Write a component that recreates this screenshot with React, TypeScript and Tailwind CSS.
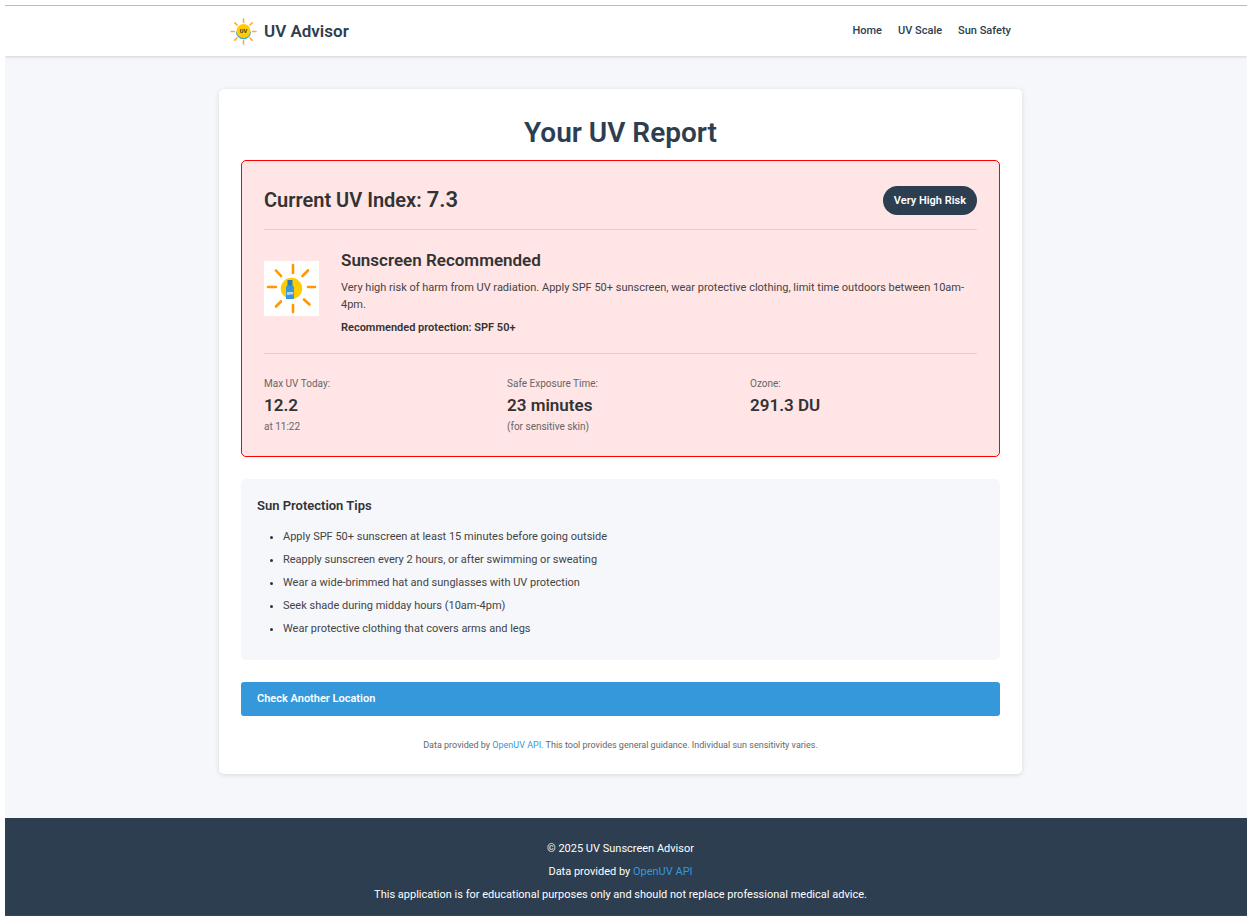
const NAV = ["Home", "UV Scale", "Sun Safety"];

const TIPS = [
  "Apply SPF 50+ sunscreen at least 15 minutes before going outside",
  "Reapply sunscreen every 2 hours, or after swimming or sweating",
  "Wear a wide-brimmed hat and sunglasses with UV protection",
  "Seek shade during midday hours (10am-4pm)",
  "Wear protective clothing that covers arms and legs",
];

const STATS = [
  { label: "Max UV Today:", value: "12.2", note: "at 11:22" },
  { label: "Safe Exposure Time:", value: "23 minutes", note: "(for sensitive skin)" },
  { label: "Ozone:", value: "291.3 DU", note: "" },
];

function LogoIcon() {
  return (
    <svg viewBox="0 0 100 100" className="size-[27px]" aria-hidden="true">
      <g stroke="#ffa837" strokeWidth="6" strokeLinecap="round">
        <path d="M50 4V16M50 84V96M4 50H16M84 50H96M18 18L26 26M74 74L82 82M18 82L26 74M74 26L82 18" />
      </g>
      <path d="M22 50A28 29 0 0 0 78 50Z" fill="#3fa0c8" />
      <circle cx="50" cy="48" r="26" fill="#ffcc00" />
      <text x="50" y="54" textAnchor="middle" fontSize="21" fontWeight="700" fill="#333333">UV</text>
    </svg>
  );
}

function SunscreenIcon() {
  return (
    <svg viewBox="0 0 55 55" className="mb-1.5 size-[55px] shrink-0 bg-white" aria-hidden="true">
      <path
        d="M29 4V12M29 44V51M4 26H12M44 26H51M12 9.500L17 15M44 9.500L38.500 15M12 45.500L17 40.500M45.500 43.500L40 38.500"
        stroke="#ff9800"
        strokeWidth="2.600"
        strokeLinecap="round"
      />
      <circle cx="27.500" cy="27.500" r="10.700" fill="#ffcc00" />
      <path d="M23.500 19H28.500V25H23.500Z" fill="#2980b9" />
      <path d="M22 26.500Q22 24.500 24 24.500H28Q30 24.500 30 26.500V38H22Z" fill="#3498db" />
      <text x="26" y="33.500" textAnchor="middle" fontSize="3.500" fontWeight="700" fill="#ffffff">SPF</text>
    </svg>
  );
}

export default function App() {
  return (
    <div className="flex min-h-screen flex-col bg-white p-[5px] font-['Roboto',sans-serif] text-[11px] leading-[17px] text-[#333333]">
      <div className="flex grow flex-col overflow-hidden border-y border-t-[#bbbbbb] border-b-[#444444] bg-[#f5f7fb]">
        <header className="bg-white pr-[11px] shadow-[0_1px_3px_rgba(0,0,0,0.15)]">
          <div className="mx-auto flex h-[50px] max-w-[803px] items-center justify-between px-[11px]">
            <a href="#home" className="flex items-center gap-[7px] text-[17px] font-semibold text-[#2c3e50]">
              <LogoIcon />
              UV Advisor
            </a>
            <nav className="flex gap-4 pb-0.5 font-medium text-[#2c3e50]">
              {NAV.map((item) => (
                <a key={item} href="#nav">{item}</a>
              ))}
            </nav>
          </div>
        </header>

        <main className="grow pt-[33px] pr-[11px] pb-11">
          <div className="mx-auto max-w-[803px] rounded-[5px] bg-white p-[22px] shadow-[0_1px_5px_rgba(0,0,0,0.12)]">
            <h1 className="pb-[5px] text-center text-[28px] leading-[44px] font-semibold text-[#2c3e50]">Your UV Report</h1>

            <section className="rounded-[5px] border border-[#ff0000] bg-[#ffe5e5] px-[22px] pt-[22px] pb-[21px]">
              <div className="flex items-center justify-between border-b border-[#e6cece] pb-3">
                <h2 className="text-[20px] leading-[34px] font-semibold">
                  Current UV Index: <span className="text-[22px]">7.3</span>
                </h2>
                <span className="rounded-full bg-[#2c3e50] px-[11px] py-1.5 font-semibold text-white">Very High Risk</span>
              </div>

              <div className="flex items-center gap-[22px] border-b border-[#e6cece] py-[17px]">
                <SunscreenIcon />
                <div>
                  <h3 className="pb-[5px] text-[17px] leading-[27px] font-semibold">Sunscreen Recommended</h3>
                  <p className="pb-1.5 text-[#444444]">
                    Very high risk of harm from UV radiation. Apply SPF 50+ sunscreen, wear protective clothing, limit time
                    outdoors between 10am-4pm.
                  </p>
                  <p className="font-semibold">Recommended protection: SPF 50+</p>
                </div>
              </div>

              <div className="grid grid-cols-3 gap-4 pt-[22px]">
                {STATS.map((s) => (
                  <div key={s.label} className="text-[10px] leading-4 text-[#666666]">
                    <p>{s.label}</p>
                    <p className="text-[17px] leading-[27px] font-semibold text-[#333333]">{s.value}</p>
                    <p>{s.note}</p>
                  </div>
                ))}
              </div>
            </section>

            <section className="mt-[22px] rounded-[5px] bg-[#f5f7fb] px-4 pt-4 pb-[23px]">
              <h3 className="pb-3 text-[13px] leading-[21px] font-semibold">Sun Protection Tips</h3>
              <ul className="flex list-disc flex-col gap-1.5 pl-[26px] text-[#444444] marker:text-[#333333]">
                {TIPS.map((tip) => (
                  <li key={tip}>{tip}</li>
                ))}
              </ul>
            </section>

            <a href="#location" className="mt-[22px] block rounded-[3px] bg-[#3498db] px-4 pt-2 pb-[9px] font-semibold text-white">
              Check Another Location
            </a>

            <p className="mt-[22px] text-center text-[9px] leading-[14px] text-[#666666]">
              Data provided by <a href="#openuv" className="text-[#3498db]">OpenUV API</a>. This tool provides general
              guidance. Individual sun sensitivity varies.
            </p>
          </div>
        </main>

        <footer className="flex flex-col gap-1.5 bg-[#2c3e50] pt-[22px] pr-[11px] pb-3 text-center text-white">
          <p>© 2025 UV Sunscreen Advisor</p>
          <p>
            Data provided by <a href="#openuv" className="text-[#3498db]">OpenUV API</a>
          </p>
          <p>This application is for educational purposes only and should not replace professional medical advice.</p>
        </footer>
      </div>
    </div>
  );
}
